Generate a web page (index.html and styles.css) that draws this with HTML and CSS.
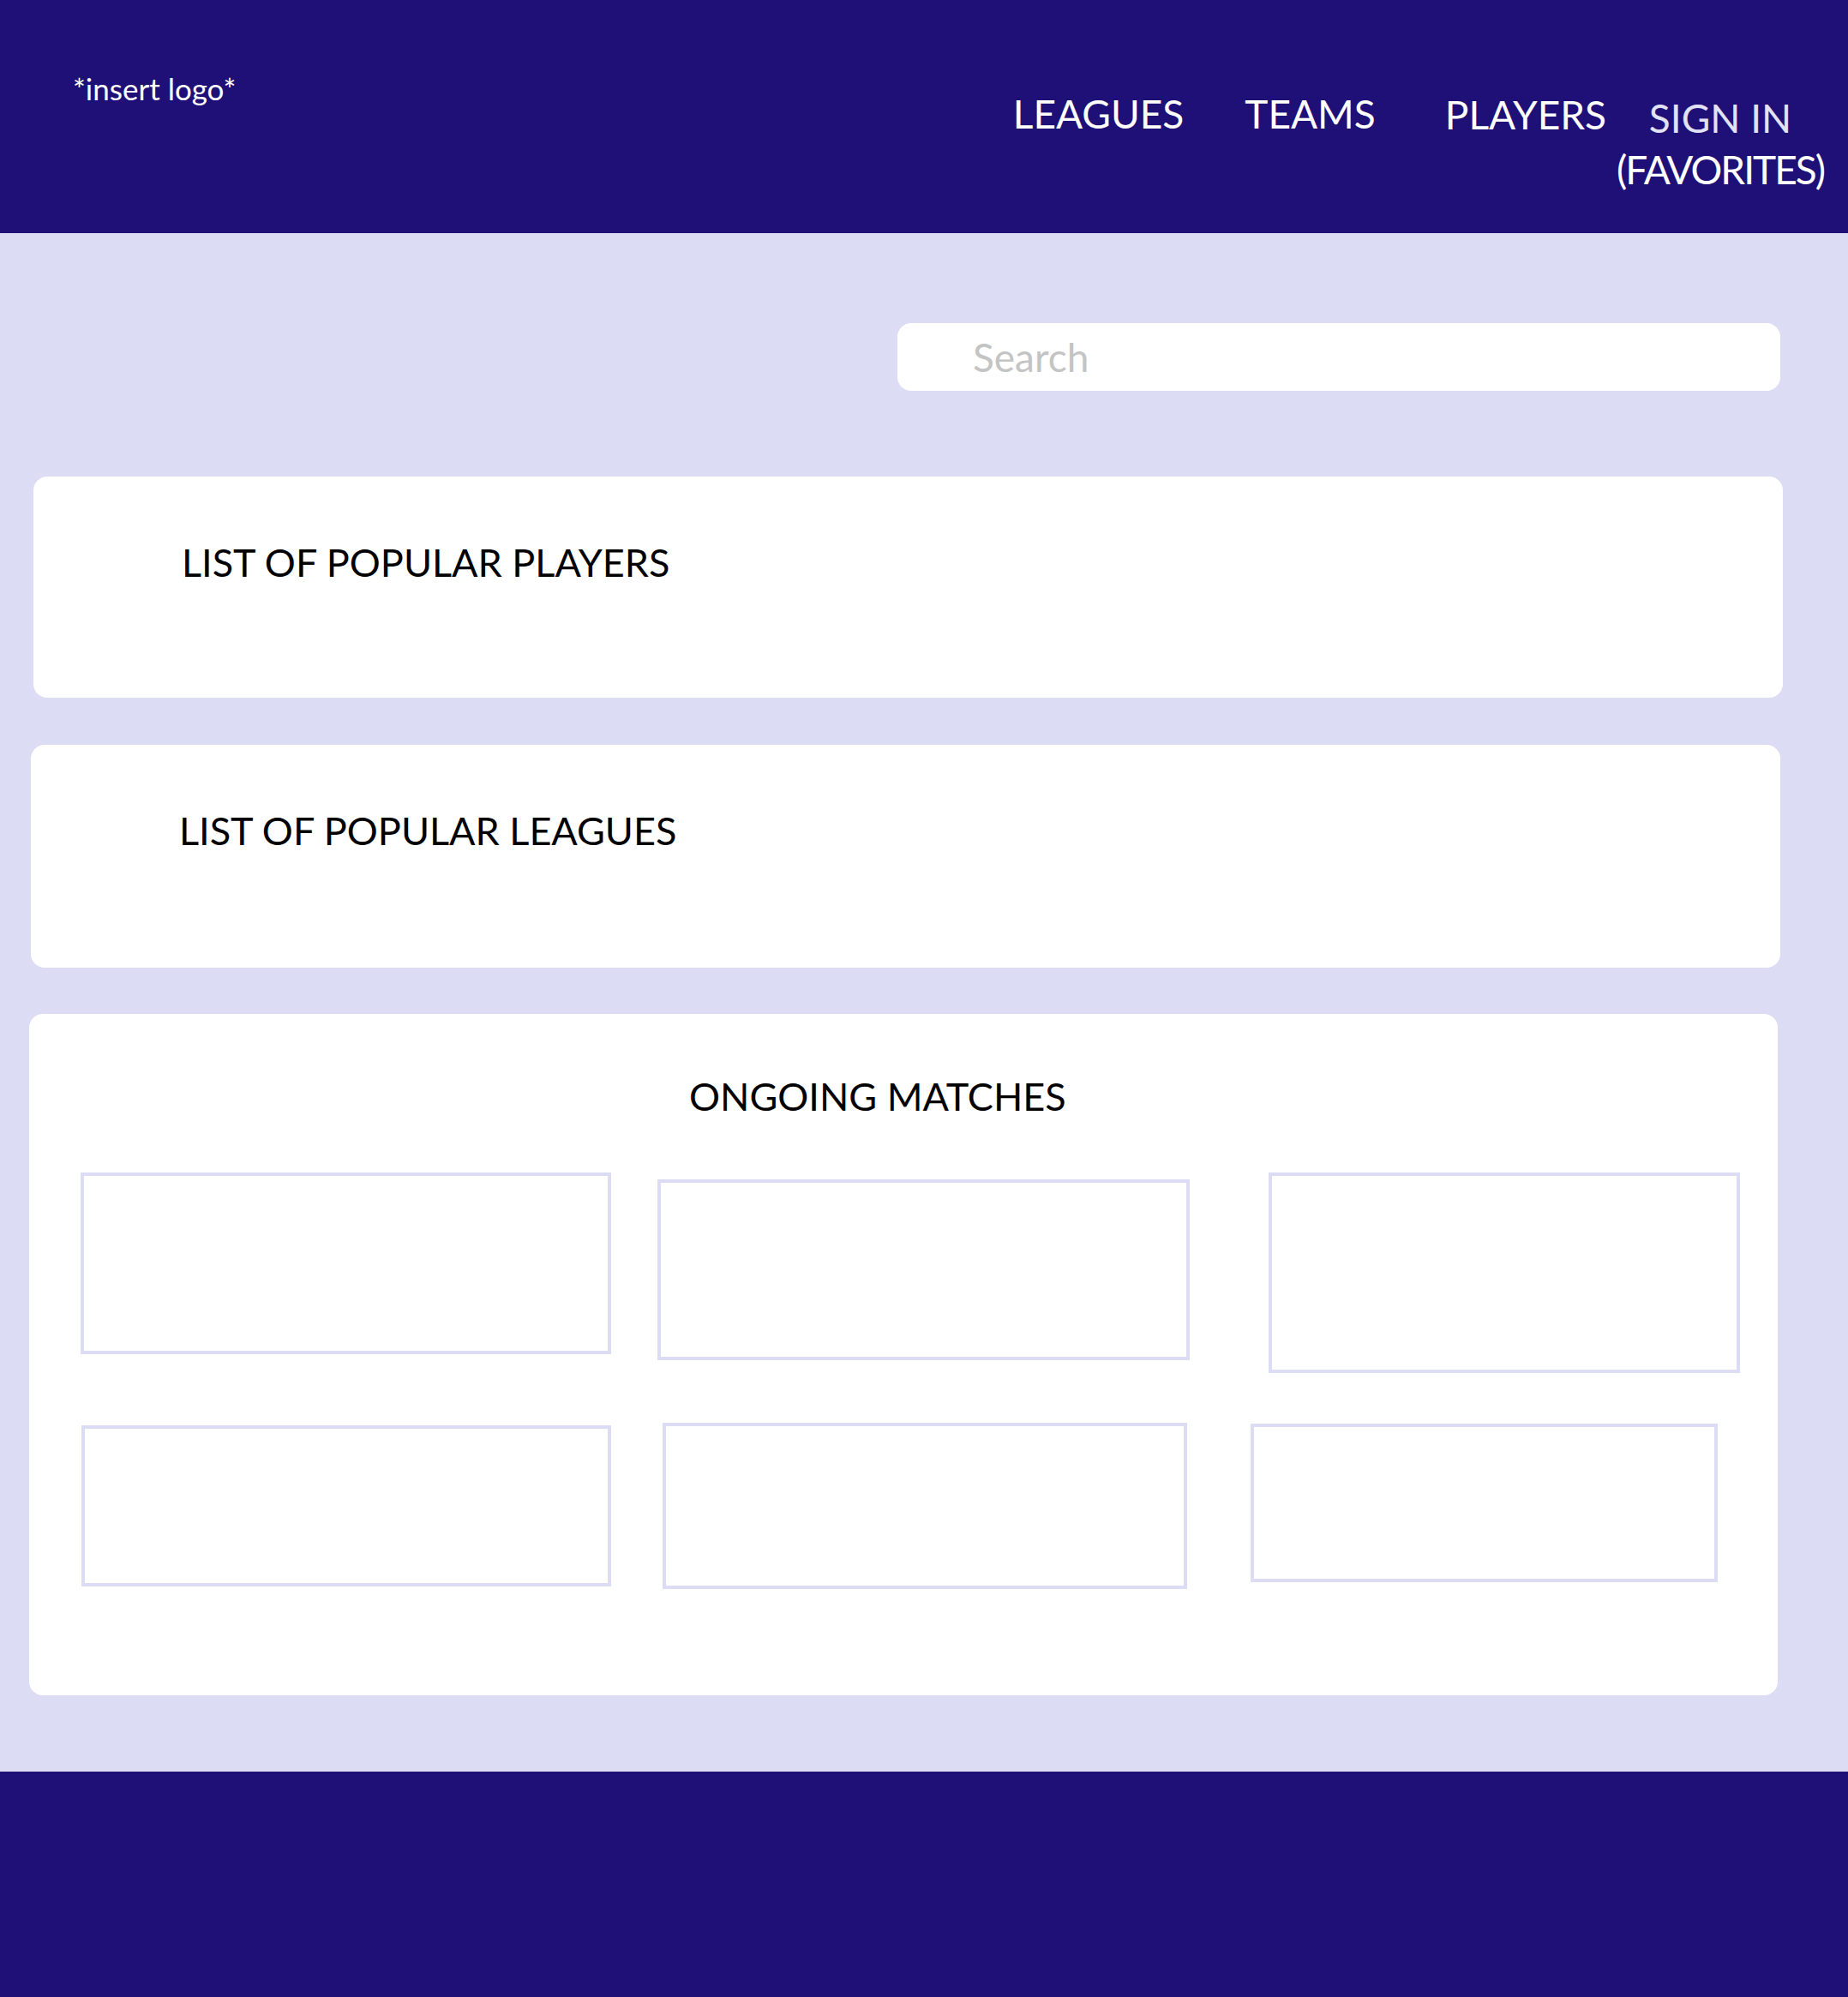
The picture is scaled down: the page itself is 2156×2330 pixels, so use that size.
FILE: index.html
```html
<!DOCTYPE html>
<html lang="en">
<head>
<meta charset="utf-8">
<title>Sports Home</title>
<link rel="stylesheet" href="styles.css">
</head>
<body>
<header class="topbar">
  <div class="logo">*insert logo*</div>
  <nav class="nav">
    <a class="nav-link nav-leagues" href="#">LEAGUES</a>
    <a class="nav-link nav-teams" href="#">TEAMS</a>
    <a class="nav-link nav-players" href="#">PLAYERS</a>
    <a class="nav-sign" href="#"><span class="sign-in">SIGN IN</span><span class="favorites">(FAVORITES)</span></a>
  </nav>
</header>
<main class="main">
  <div class="search-row">
    <input class="search" type="text" placeholder="Search">
  </div>
  <section class="card card-players">
    <h2 class="card-title">LIST OF POPULAR PLAYERS</h2>
  </section>
  <section class="card card-leagues">
    <h2 class="card-title">LIST OF POPULAR LEAGUES</h2>
  </section>
  <section class="card card-matches">
    <h2 class="matches-title">ONGOING MATCHES</h2>
    <div class="match-row row-1">
      <div class="match m1"></div>
      <div class="match m2"></div>
      <div class="match m3"></div>
    </div>
    <div class="match-row row-2">
      <div class="match m4"></div>
      <div class="match m5"></div>
      <div class="match m6"></div>
    </div>
  </section>
</main>
<footer class="footer"></footer>
</body>
</html>
```
FILE: styles.css
```css
* { box-sizing: border-box; }
html, body { margin: 0; padding: 0; }
body {
  font-family: Lato, "Open Sans", "Liberation Sans", sans-serif;
  background: #dcddf4;
  width: 2156px;
}
.topbar {
  height: 272px;
  background: #1f1077;
  display: flex;
  align-items: flex-start;
  color: #ffffff;
}
.logo {
  font-size: 35px;
  line-height: 38px;
  margin-top: 84px;
  margin-left: 85px;
  color: #ffffff;
}
.nav {
  display: flex;
  align-items: flex-start;
  margin-left: auto;
  margin-right: 28px;
  margin-top: 105px;
}
.nav-link, .nav-sign {
  color: #ffffff;
  text-decoration: none;
  font-size: 46px;
  line-height: 55px;
}
.nav-teams { margin-left: 71px; }
.nav-players { margin-left: 81px; margin-top: 1px; }
.nav-sign {
  display: flex;
  flex-direction: column;
  align-items: center;
  margin-left: 12px;
  margin-top: 3px;
}
.sign-in { color: #e2e2f6; line-height: 59px; }
.favorites { color: #ffffff; line-height: 59px; margin-top: 1px; letter-spacing: -2px; }

.main {
  height: 1795px;
  padding: 105px 0 89px 0;
}
.search-row {
  display: flex;
  justify-content: flex-end;
  padding-right: 79px;
}
.search {
  width: 1030px;
  height: 79px;
  border: none;
  border-radius: 16px;
  background: #ffffff;
  padding: 0 0 0 88px;
  font-family: Lato, "Open Sans", sans-serif;
  font-size: 46px;
  color: #333;
  outline: none;
}
.search::placeholder { color: #c4c4c4; }

.card {
  background: #ffffff;
  border-radius: 16px;
}
.card-players {
  margin: 100px 0 0 39px;
  width: 2041px;
  height: 258px;
  padding: 73px 0 0 173px;
}
.card-leagues {
  margin: 55px 0 0 36px;
  width: 2041px;
  height: 260px;
  padding: 73px 0 0 173px;
}
.card-title {
  margin: 0;
  font-size: 45px;
  line-height: 54px;
  font-weight: 400;
  color: #000000;
}
.card-matches {
  margin: 54px 0 0 34px;
  width: 2040px;
  height: 795px;
  padding: 69px 0 0 60px;
}
.matches-title {
  margin: 0 0 62px 0;
  font-size: 45px;
  line-height: 54px;
  font-weight: 400;
  color: #000000;
  padding-left: 710px;
}
.match-row {
  display: flex;
  align-items: flex-start;
}
.row-2 { margin-top: 58px; }
.match {
  border: 4px solid #dcddf4;
  background: #ffffff;
  flex: none;
}
.m1 { width: 619px; height: 212px; }
.m2 { width: 621px; height: 211px; margin-left: 54px; margin-top: 8px; }
.m3 { width: 550px; height: 234px; margin-left: 92px; }
.m4 { width: 618px; height: 188px; margin-left: 1px; margin-top: 3px; }
.m5 { width: 612px; height: 194px; margin-left: 60px; }
.m6 { width: 545px; height: 185px; margin-left: 74px; margin-top: 1px; }

.footer {
  height: 263px;
  background: #1f1077;
}
```
